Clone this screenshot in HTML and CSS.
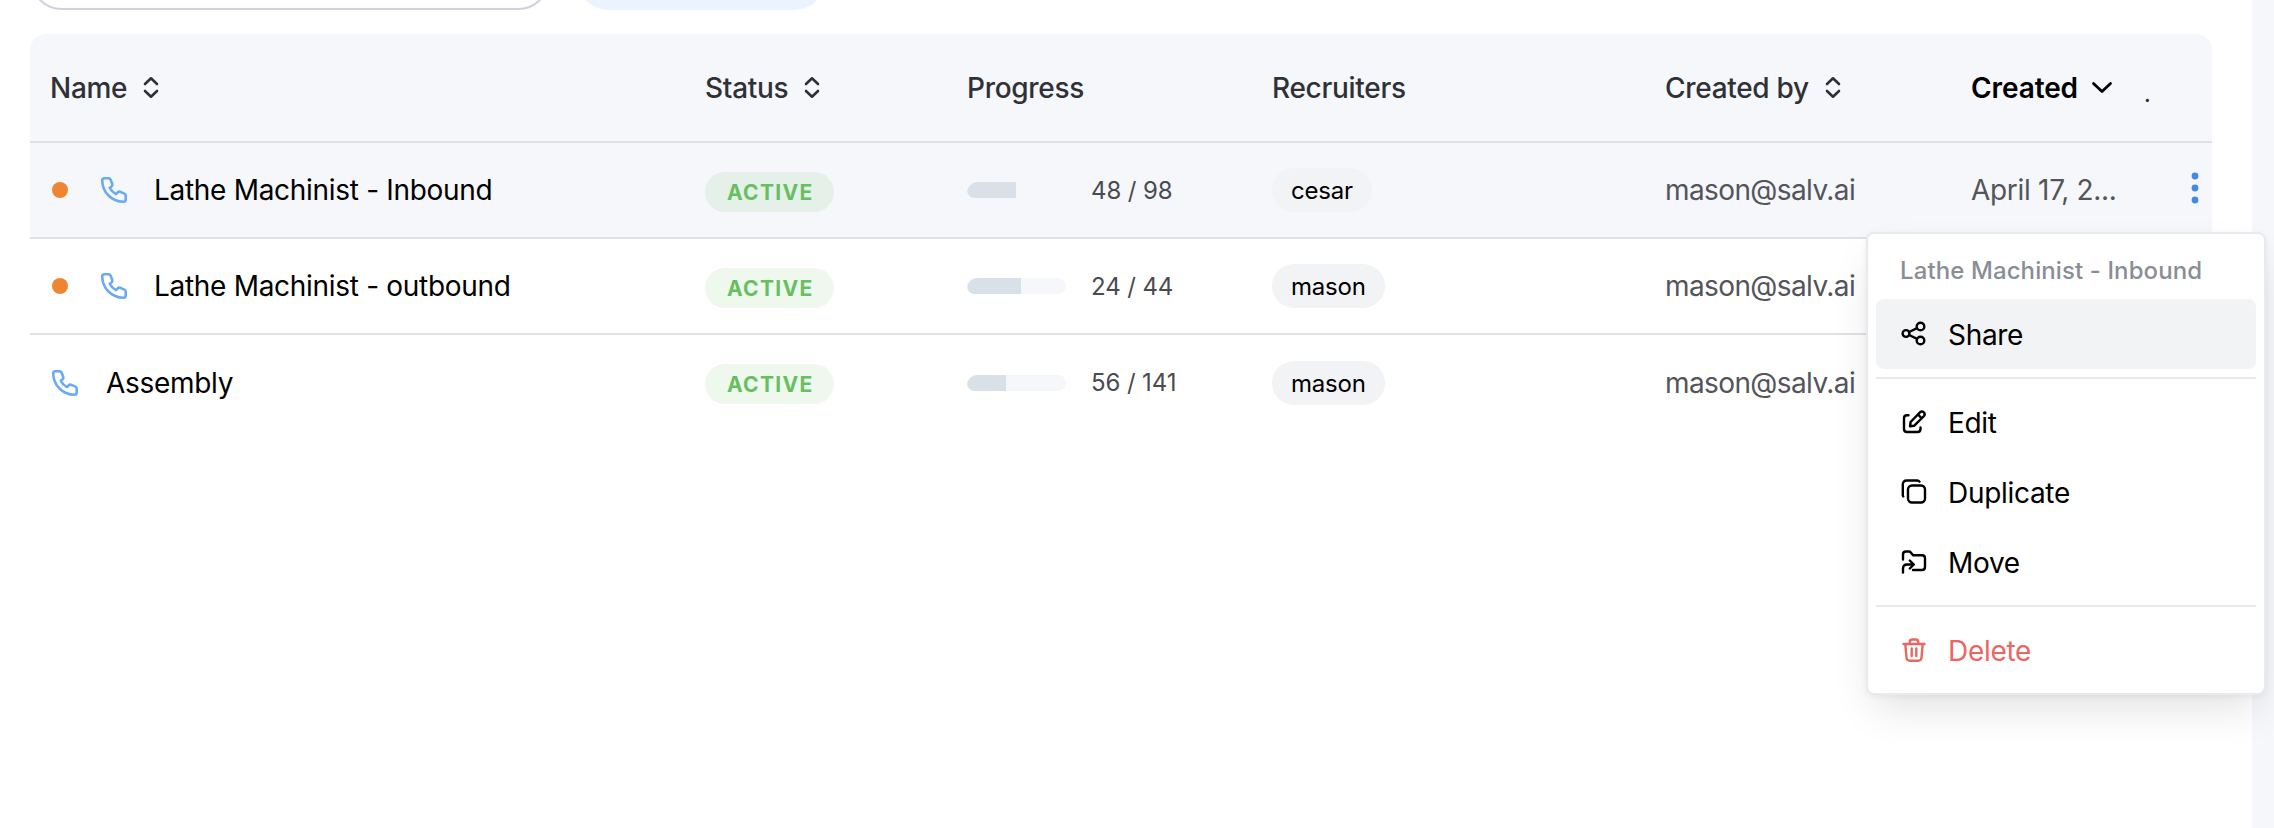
FILE: index.html
```
<!DOCTYPE html>
<html lang="en">
<head>
  <meta charset="UTF-8">
  <title>Jobs</title>
  <meta name="viewport" content="width=device-width, initial-scale=1.0">
  <link rel="stylesheet" href="styles.css">
</head>
<body>

  <!-- shared icons -->
  <svg class="sprite" width="0" height="0">
    <symbol id="icon-sort" viewBox="0 0 18 24">
      <path d="M3 8 9 2.300l6 5.700M3 15 9 20.700l6-5.700"/>
    </symbol>
    <symbol id="icon-phone" viewBox="0 0 28 28">
      <path d="M4.2 2.3H8.700Q10 2.300 10.500 3.500L12.300 8Q12.700 9.300 11.700 10.200L9.800 11.800Q11.900 15.900 16 18.200L17.700 16.300Q18.600 15.300 19.900 15.800L24.500 17.600Q25.700 18.100 25.700 19.400V23.500Q25.700 25.800 23.400 25.800C11.500 25.500 2.500 16.500 2.200 4.500Q2.200 2.300 4.200 2.300Z"/>
    </symbol>
  </svg>

  <div class="page">
    <div class="toolbar">
      <div class="search-box"></div>
      <div class="filter-btn"></div>
    </div>

    <div class="table">
      <div class="row header">
        <div class="cell">Name <svg class="sort"><use href="#icon-sort"/></svg></div>
        <div class="cell">Status <svg class="sort"><use href="#icon-sort"/></svg></div>
        <div class="cell">Progress</div>
        <div class="cell">Recruiters</div>
        <div class="cell">Created by <svg class="sort"><use href="#icon-sort"/></svg></div>
        <div class="cell sorted">Created <svg class="chevron" viewBox="0 0 24 24"><path d="m3.500 7.500 8.500 8 8.500-8"/></svg></div>
        <div class="cell more">.</div>
      </div>

      <div class="row hovered">
        <div class="cell name"><span class="dot"></span><svg class="phone"><use href="#icon-phone"/></svg>Lathe Machinist - Inbound</div>
        <div class="cell"><span class="badge">ACTIVE</span></div>
        <div class="cell progress"><div class="bar"><div class="fill" style="width: 49%"></div></div>48 / 98</div>
        <div class="cell"><span class="pill">cesar</span></div>
        <div class="cell muted">mason@salv.ai</div>
        <div class="cell muted date">April 17, 2...</div>
        <div class="cell actions">
          <svg width="12" height="34" viewBox="0 0 12 34"><circle cx="6" cy="5" r="3.400"/><circle cx="6" cy="17" r="3.400"/><circle cx="6" cy="29" r="3.400"/></svg>
        </div>
      </div>

      <div class="row">
        <div class="cell name"><span class="dot"></span><svg class="phone"><use href="#icon-phone"/></svg>Lathe Machinist - outbound</div>
        <div class="cell"><span class="badge">ACTIVE</span></div>
        <div class="cell progress"><div class="bar"><div class="fill" style="width: 54.500%"></div></div>24 / 44</div>
        <div class="cell"><span class="pill">mason</span></div>
        <div class="cell muted">mason@salv.ai</div>
      </div>

      <div class="row last">
        <div class="cell name"><svg class="phone"><use href="#icon-phone"/></svg>Assembly</div>
        <div class="cell"><span class="badge">ACTIVE</span></div>
        <div class="cell progress"><div class="bar"><div class="fill" style="width: 39.700%"></div></div>56 / 141</div>
        <div class="cell"><span class="pill">mason</span></div>
        <div class="cell muted">mason@salv.ai</div>
      </div>
    </div>
  </div>

  <div class="menu">
    <div class="menu-title">Lathe Machinist - Inbound</div>
    <div class="menu-item active">
      <svg viewBox="0 0 28 28"><circle cx="6" cy="13.500" r="3.400"/><circle cx="20.500" cy="6.500" r="3.800"/><circle cx="20.500" cy="20.500" r="3.800"/><path d="m9.100 12 8-3.800M9.100 15l8 3.800"/></svg>
      <span>Share</span>
    </div>
    <div class="divider"></div>
    <div class="menu-item">
      <svg viewBox="0 0 28 28"><path d="M8.500 7.200H7Q4 7.200 4 10.200V21Q4 24 7 24H17.500Q20.500 24 20.500 21V19.500"/><path d="M10 18.300 10.600 14 20.200 4.200Q21.900 2.700 23.800 4.300 25.500 6.200 24 8L14.300 17.700ZM18 6.500 21.800 10.300"/></svg>
      <span>Edit</span>
    </div>
    <div class="menu-item">
      <svg viewBox="0 0 28 28"><rect x="8" y="7.500" width="17" height="17" rx="4"/><path d="M3.300 18.500Q2.800 18 2.800 17V6.500Q2.800 2.500 6.800 2.500H17Q18.700 2.500 19.500 3.600"/></svg>
      <span>Duplicate</span>
    </div>
    <div class="menu-item">
      <svg viewBox="0 0 28 28"><path d="M3 11.500V6.500Q3 3.500 6 3.500H8.800Q10 3.500 10.800 4.500L13 7.200H22Q25 7.200 25 10.200V19Q25 22 22 22H13"/><path d="M3 24.500V20.500Q3 16.500 7 16.500H13M9.800 12.500l4 4-4 4"/></svg>
      <span>Move</span>
    </div>
    <div class="divider"></div>
    <div class="menu-item danger">
      <svg viewBox="0 0 28 28"><path d="M3.500 8H24.500M9.800 8V6Q9.800 3.500 12.300 3.500H15.700Q18.200 3.500 18.200 6V8M5.300 8 6.500 21.500Q6.800 24.800 9.800 24.800H18.200Q21.200 24.800 21.500 21.500L22.700 8M11.700 12.500V20M16.300 12.500V20"/></svg>
      <span>Delete</span>
    </div>
  </div>

</body>
</html>
```
FILE: styles.css
```
* {
  box-sizing: border-box;
}

body {
  margin: 0;
  background-color: #f5f7fb;
  font-family: Inter, sans-serif;
  font-size: 28px;
  letter-spacing: -0.3px;
  color: #000;
  overflow: hidden;
}

svg {
  fill: none;
  stroke: currentColor;
  stroke-width: 2.4;
  stroke-linecap: round;
  stroke-linejoin: round;
  flex-shrink: 0;
}

.sprite {
  display: none;
}

.page {
  width: 2252px;
  height: 828px;
  padding: 0 40px 0 30px;
  background-color: #fff;
}

/* toolbar is scrolled almost out of view */
.toolbar {
  display: flex;
  align-items: flex-end;
  gap: 27px;
  height: 10px;
  margin-bottom: 24px;
}

.search-box {
  width: 520px;
  height: 64px;
  border: 2px solid #cfd1de;
  border-radius: 32px;
}

.filter-btn {
  width: 249px;
  height: 64px;
  border-radius: 32px;
  background-color: #ebf3fe;
}

.table {
  border-radius: 16px;
  overflow: hidden;
}

.row {
  display: grid;
  grid-template-columns: 655px 262px 305px 393px 306px 173px 1fr;
  align-items: center;
  height: 96px;
  padding-left: 20px;
  border-bottom: 2px solid #e0e1e6;
}

.row.header {
  height: 109px;
  background-color: #f5f7fb;
  font-weight: 500;
  letter-spacing: -0.3px;
  color: #2f3136;
}

.row.hovered {
  background-color: #f5f7fb;
}

.row.last {
  height: 95px;
  border-bottom: none;
}

.cell {
  display: flex;
  align-items: center;
  white-space: nowrap;
}

.sort {
  width: 18px;
  height: 24px;
  margin-left: 15px;
  stroke-width: 2.6;
}

.header .sorted {
  color: #000;
  font-weight: 600;
  letter-spacing: -0.1px;
}

.chevron {
  width: 24px;
  height: 24px;
  margin-left: 12px;
  stroke-width: 2.8;
}

.more {
  padding-top: 12px;
  font-size: 22px;
}

.dot {
  width: 16px;
  height: 16px;
  margin: 0 32px 0 2px;
  border-radius: 50%;
  background-color: #ef8533;
}

.phone {
  width: 28px;
  height: 28px;
  margin-right: 26px;
  color: #6aaaf5;
  stroke-width: 2.6;
}

.last .phone {
  margin: 0 27px 0 1px;
}

.badge {
  height: 40px;
  margin-top: 3px;
  padding: 0 21px 0 22px;
  border-radius: 20px;
  background-color: rgba(100, 195, 90, 0.11);
  color: #66bf60;
  font-size: 21px;
  font-weight: 700;
  line-height: 41px;
  letter-spacing: 1.3px;
}

.progress {
  gap: 25px;
  font-size: 24px;
  letter-spacing: -0.1px;
  color: #494b50;
}

.bar {
  width: 99px;
  height: 16px;
  border-radius: 8px;
  background-color: #f5f7fb;
  overflow: hidden;
}

.fill {
  height: 100%;
  border-radius: 14px 0 0 6px;
  background-color: #dae0e8;
}

.pill {
  height: 44px;
  padding: 0 19px;
  border-radius: 22px;
  background-color: #f2f3f5;
  font-size: 24px;
  line-height: 45px;
  letter-spacing: -0.2px;
}

.muted {
  letter-spacing: -0.6px;
  color: #53555a;
}

.date {
  letter-spacing: -0.3px;
}

.actions {
  padding: 0 0 5px 45px;
}

.actions svg {
  fill: #4489e6;
  stroke: none;
}

/* row context menu */
.menu {
  position: absolute;
  left: 1866px;
  top: 232px;
  width: 400px;
  padding: 8px;
  border: 2px solid #e9eaed;
  border-radius: 8px;
  background-color: #fff;
  box-shadow: 0 2px 6px rgba(0, 0, 0, 0.05), 0 20px 40px -8px rgba(0, 0, 0, 0.12);
}

.menu-title {
  height: 57px;
  padding-left: 24px;
  font-size: 24px;
  font-weight: 500;
  line-height: 57px;
  letter-spacing: 0.1px;
  color: #898e96;
  white-space: nowrap;
}

.menu-item {
  display: flex;
  align-items: center;
  gap: 20px;
  height: 70px;
  padding-left: 24px;
  border-radius: 8px;
}

.menu-item.active {
  background-color: #f1f3f5;
}

.menu-item svg {
  width: 28px;
  height: 28px;
}

.menu-item span {
  padding-top: 2px;
}

.menu-item.danger {
  color: #ec6660;
}

.divider {
  height: 2px;
  margin: 8px 0;
  background-color: #e8e9eb;
}
```
